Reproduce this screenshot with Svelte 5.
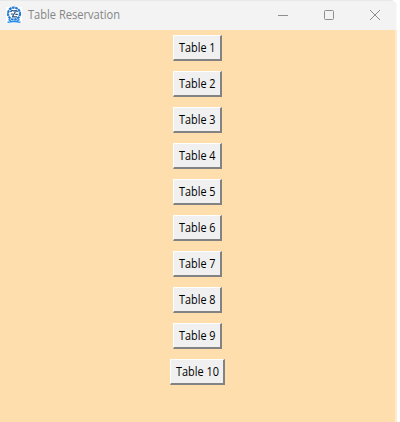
<script>
  const tables = Array.from({ length: 10 }, (_, i) => i + 1);
</script>

<div class="window">
  <header>
    <svg class="logo" width="16" height="18" viewBox="0 0 16 18">
      <rect y="1" width="16" height="16" fill="#fff" />
      <g fill="none" stroke="#1e78d2">
        <circle cx="8" cy="7.6" r="6" stroke-width="2.2" stroke-dasharray="2.6 .6" />
        <path d="M4.5 6Q6 3.6 8 5Q10.2 3.6 11.5 6M9.5 5.5L6.5 10.5M4.8 8h2.2M9.3 8.3h2.5M6 10.8h5" stroke="#24527f" stroke-width="1.2" />
        <path d="M1.5 16.3Q8 14.6 14.5 16.3M2.5 13.4L5 15.2M13.5 13.4L11 15.2" stroke="#258be8" stroke-width="1.5" />
      </g>
    </svg>
    <svg class="title" width="94" height="20"><text x="0" y="14" textLength="92" lengthAdjust="spacingAndGlyphs">Table Reservation</text></svg>
    <div class="controls">
      <svg width="12" height="12" viewBox="0 0 12 12"><path d="M1 6.5h10" /></svg>
      <svg width="12" height="12" viewBox="0 0 12 12"><rect x="1.5" y="1.5" width="9" height="9" rx="1" /></svg>
      <svg width="12" height="12" viewBox="0 0 12 12"><path d="M1 1L11 11M11 1L1 11" /></svg>
    </div>
  </header>
  <main>
    {#each tables as n}
      <button class:wide={n > 9}>
        <svg width={n > 9 ? 46 : 40} height="20"><text x="2" y="14" textLength={n > 9 ? 43 : 36.5} lengthAdjust="spacingAndGlyphs">Table {n}</text></svg>
      </button>
    {/each}
  </main>
</div>

<style>
  :global(body) { background: #fff; overflow: hidden; }
  .window {
    box-sizing: border-box;
    width: 397px;
    height: 422px;
    display: flex;
    flex-direction: column;
    font-family: "Open Sans", "Noto Sans", sans-serif;
    border-top-right-radius: 7px;
    overflow: hidden;
    background: #f3f3f3;
  }
  header {
    box-sizing: border-box;
    height: 30px;
    display: flex;
    align-items: center;
    padding: 0 15px 2px 6px;
    background: #f3f3f3;
    border-top: 1px solid #e8e8e8;
    border-right: 1px solid #fafafa;
  }
  svg { display: block; flex: none; overflow: visible; }
  .title { margin-left: 6px; }
  .title text { font-size: 12px; fill: #858585; }
  .controls { display: flex; gap: 34px; margin-left: auto; }
  .controls svg { fill: none; stroke: #8e8e8e; stroke-width: 1; }
  main {
    flex: 1;
    display: flex;
    flex-direction: column;
    align-items: center;
    gap: 10px;
    padding-top: 5px;
    background: #ffdead;
    border-right: 2px solid #ffebcc;
  }
  button {
    box-sizing: border-box;
    width: 49px;
    height: 26px;
    display: flex;
    align-items: center;
    justify-content: center;
    padding: 0;
    background: #f0f0f0;
    border: 1px solid #fff;
    border-right: 2px solid #828282;
    border-bottom: 2px solid #828282;
    font-family: inherit;
  }
  button.wide { width: 55px; }
  button text { font-size: 12px; fill: #000; }
</style>
